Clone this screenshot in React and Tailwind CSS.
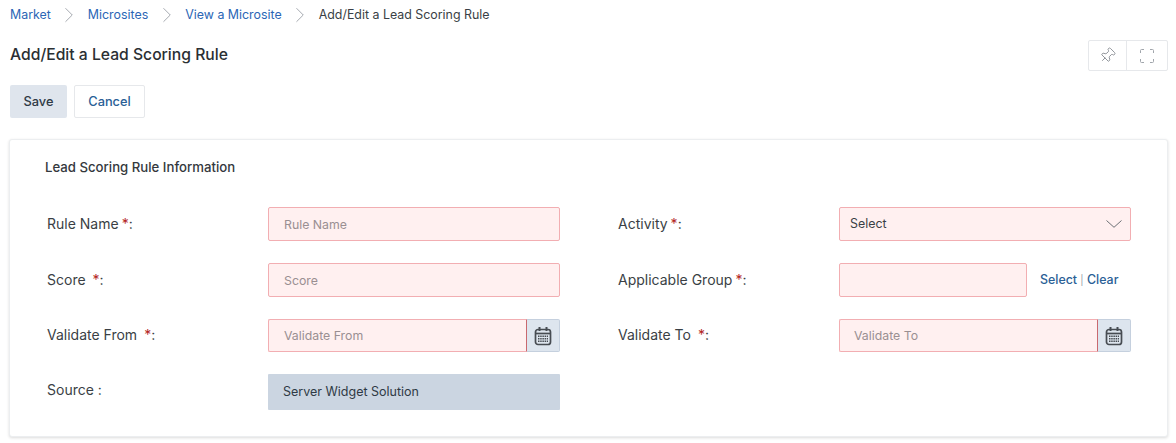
import React from 'react'
import { Pin, ChevronRight } from 'lucide-react'

const CalendarIcon = () => (
  <svg width="18" height="20" viewBox="0 0 18 20" fill="none" stroke="#474c52" strokeWidth="1.7">
    <rect x="1.5" y="3.5" width="15" height="15" rx="2.5" />
    <path d="M2 7.5h14" />
    <path d="M5.5 1v4M12.5 1v4" strokeWidth="2" />
    <path d="M4 10.2h10M4 12.7h10M4 15.2h10" strokeWidth="1.6" strokeDasharray="1.5 0.7" />
  </svg>
)

const FullscreenIcon = () => (
  <svg width="16" height="16" viewBox="0 0 16 16" fill="none" stroke="#a0a5ab" strokeWidth="1">
    <path d="M1.5 5V2.5a1 1 0 0 1 1-1H5M11 1.5h2.5a1 1 0 0 1 1 1V5M14.5 11v2.5a1 1 0 0 1-1 1H11M5 14.5H2.5a1 1 0 0 1-1-1V11" />
  </svg>
)

const Crumb = ({ children }) => (
  <>
    <a className="text-[#2b66b5]">{children}</a>
    <ChevronRight size={26} strokeWidth={0.7} className="mx-[5.5px] text-[#8a8f96]" />
  </>
)

const Label = ({ name, gap, className }) => (
  <label className={`-mt-[2px] w-[221px] text-[14px] text-[#3a3f45] ${className || ''}`}>
    {name}
    <span className={`text-[#b3261e] ${gap || 'ml-[3px]'}`}>*</span>:
  </label>
)

const inputClass = "h-full w-full min-w-0 rounded-[2px] border border-[#f2aeb2] bg-[#fff0f0] px-[15px] text-[12.3px] text-[#3a3f45] outline-none placeholder:text-[#9a8f92]"

const DateInput = ({ placeholder, inputWidth }) => (
  <div className="flex h-full w-[292px]">
    <input
      placeholder={placeholder}
      className={`h-full min-w-0 flex-1 rounded-l-[2px] border border-[#f2aeb2] border-r-[#c9686f] bg-[#fff0f0] text-[12.3px] outline-none placeholder:text-[#9a8f92] ${inputWidth}`}
    />
    <div className="flex h-full w-[33px] items-center justify-center rounded-r-[2px] border border-l-0 border-[#c5d0de] bg-[#dde5ee]">
      <CalendarIcon />
    </div>
  </div>
)

export default function App() {
  return (
    <div className="h-[443px] w-[1176px] overflow-hidden bg-white font-['Inter',sans-serif]">
      {/* breadcrumb */}
      <nav className="flex h-[30px] items-center pl-[10px] text-[12.4px]">
        <Crumb>Market</Crumb>
        <Crumb>Microsites</Crumb>
        <Crumb>View a Microsite</Crumb>
        <span className="text-[#3a3f45]">Add/Edit a Lead Scoring Rule</span>
      </nav>

      {/* title row */}
      <div className="flex h-[41px] items-start justify-between pl-[10px] pr-[8px]">
        <h1 className="mt-[15px] text-[15.7px] leading-[20px] font-medium text-[#2b2f33]">Add/Edit a Lead Scoring Rule</h1>
        <div className="mt-[10px] flex h-[31px] rounded-[2px] border border-[#e6e8eb]">
          <div className="flex w-[38px] items-center justify-center border-r border-[#e6e8eb]">
            <Pin size={17} strokeWidth={1.1} className="rotate-45 text-[#7b8087]" />
          </div>
          <div className="flex w-[40px] items-center justify-center">
            <FullscreenIcon />
          </div>
        </div>
      </div>

      {/* actions */}
      <div className="mt-[14px] flex gap-[7px] pl-[10px]">
        <button className="h-[33px] w-[57px] rounded-[2px] bg-[#dfe5ed] text-[12.8px] font-medium text-[#2f3a45]">Save</button>
        <button className="h-[33px] w-[71px] rounded-[2px] border border-[#e6e8eb] bg-white text-[12.8px] font-medium text-[#2a6096]">Cancel</button>
      </div>

      {/* form card */}
      <section className="mx-[9px] mt-[21px] h-[298px] w-[1159px] rounded-[3px] border border-[#eceef0] bg-white pt-[19px] pl-[35px] shadow-[0_1px_3px_rgba(0,0,0,0.14)]">
        <h2 className="text-[13.2px] leading-[16px] font-medium text-[#34383d]">Lead Scoring Rule Information</h2>

        <div className="mt-[32px] flex h-[34px] items-center pl-[2px]">
          <Label name="Rule Name" />
          <div className="h-full w-[292px]">
            <input placeholder="Rule Name" className={inputClass} />
          </div>
          <Label name="Activity" className="ml-[58px]" />
          <div className="flex h-full w-[292px] items-center justify-between rounded-[2px] border border-[#f2aeb2] bg-[#fff0f0] pr-[8px] pl-[10px] text-[12.4px] text-[#3a3f45]">
            Select
            <svg width="16" height="8" viewBox="0 0 16 8" fill="none" stroke="#6b7075" strokeWidth="1">
              <path d="M0.5 0.5 8 7.3l7.5-6.8" />
            </svg>
          </div>
        </div>

        <div className="mt-[22px] flex h-[34px] items-center pl-[2px]">
          <Label name="Score" gap="ml-[7px]" />
          <div className="h-full w-[292px]">
            <input placeholder="Score" className={inputClass} />
          </div>
          <Label name="Applicable Group" className="ml-[58px]" />
          <div className="h-full w-[188px]">
            <input className={inputClass} />
          </div>
          <div className="ml-[13px] text-[12.4px] font-medium text-[#2a6096]">
            Select <span className="text-[10px] font-normal text-[#9aa0a6]">|</span> Clear
          </div>
        </div>

        <div className="mt-[22px] flex h-[33px] items-center pl-[2px]">
          <Label name="Validate From" gap="ml-[7px]" />
          <DateInput placeholder="Validate From" inputWidth="px-[15px]" />
          <Label name="Validate To" gap="ml-[7px]" className="ml-[58px]" />
          <DateInput placeholder="Validate To" inputWidth="px-[14px]" />
        </div>

        <div className="mt-[22px] flex h-[36px] items-center pl-[2px]">
          <label className="-mt-[5px] w-[221px] text-[14px] text-[#3a3f45]">Source :</label>
          <div className="flex h-full w-[292px] items-center rounded-[1px] bg-[#cbd5e1] px-[15px] text-[12.5px] text-[#2f3a45]">
            Server Widget Solution
          </div>
        </div>
      </section>
    </div>
  )
}
